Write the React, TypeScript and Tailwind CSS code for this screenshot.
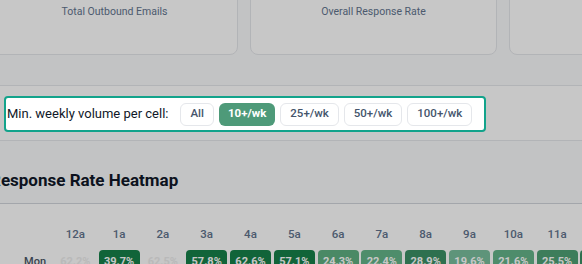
import { FC } from "react";

const HOURS = ["12a", "1a", "2a", "3a", "4a", "5a", "6a", "7a", "8a", "9a", "10a", "11a", "12p"];

// null bg = low volume cell (faded out)
const MON: { v: string; bg: string | null }[] = [
  { v: "62.2%", bg: null },
  { v: "39.7%", bg: "#17814a" },
  { v: "62.5%", bg: null },
  { v: "57.8%", bg: "#17814a" },
  { v: "62.6%", bg: "#17814a" },
  { v: "57.1%", bg: "#17814a" },
  { v: "24.3%", bg: "#5fb082" },
  { v: "22.4%", bg: "#65b589" },
  { v: "28.9%", bg: "#3b9066" },
  { v: "19.6%", bg: "#79be9d" },
  { v: "21.6%", bg: "#65b489" },
  { v: "25.5%", bg: "#4fa175" },
  { v: "31.0%", bg: "#3b9066" },
];

const FILTERS = ["All", "10+/wk", "25+/wk", "50+/wk", "100+/wk"];

const StatCard: FC<{ label: string }> = ({ label }) => (
  <div className="w-[247px] h-[76px] shrink-0 rounded-lg border border-gray-200 bg-white flex justify-center pt-[24px]">
    <span className="text-[10.5px] leading-4 text-slate-500">{label}</span>
  </div>
);

const App: FC = () => {
  return (
    <div
      className="relative w-[582px] h-[264px] overflow-hidden bg-gray-50"
      style={{ fontFamily: "Roboto, 'Liberation Sans', sans-serif" }}
    >
      {/* stat cards */}
      <div className="flex gap-3 -ml-[9px] -mt-[21px]">
        <StatCard label="Total Outbound Emails" />
        <StatCard label="Overall Response Rate" />
        <StatCard label="Avg Response Time" />
      </div>

      {/* filter band */}
      <div className="mt-[30px] -mx-4 px-4 border-y border-gray-200 bg-white pt-[10px] pb-[8px]">
        <div className="relative z-50 w-[482px] ml-[4px] h-[36px] flex items-center gap-3 rounded border-2 border-[#12a38b] bg-white pl-px pr-[10px]">
          <span className="text-[13px] text-gray-900 whitespace-nowrap">
            Min. weekly volume per cell:
          </span>
          <div className="flex gap-[5px]">
            {FILTERS.map((f) =>
              f === "10+/wk" ? (
                <button key={f} className="h-[23px] px-[9px] rounded-md bg-[#4e9a79] text-white text-[11.5px] font-bold">
                  {f}
                </button>
              ) : (
                <button key={f} className="h-[23px] px-[9px] rounded-md border border-gray-200 bg-white text-slate-600 text-[11.5px] font-medium">
                  {f}
                </button>
              )
            )}
          </div>
        </div>
      </div>

      {/* heatmap header */}
      <div className="h-[62px] flex items-center -ml-[10px] pt-[18px]">
        <h2 className="text-[17px] font-bold text-gray-900">Response Rate Heatmap</h2>
      </div>

      {/* heatmap body */}
      <div className="border-t border-gray-300 bg-white pt-[22px]">
        <div className="grid grid-cols-[48px_repeat(13,41px)] gap-x-[2.8px] gap-y-[8px] ml-[4px]">
          <div />
          {HOURS.map((h) => (
            <div key={h} className="text-center text-[11.5px] font-medium text-slate-500 leading-4">
              {h}
            </div>
          ))}
          <div className="flex items-center justify-end pr-[6px] text-[11px] font-medium text-gray-600">Mon</div>
          {MON.map((c, i) =>
            c.bg ? (
              <div
                key={i}
                className="h-[24px] rounded flex items-center justify-center text-[11px] font-bold text-white"
                style={{ backgroundColor: c.bg }}
              >
                {c.v}
              </div>
            ) : (
              <div key={i} className="h-[24px] rounded flex items-center justify-center text-[11px] font-bold text-[#eeeeee]">
                {c.v}
              </div>
            )
          )}
        </div>
      </div>

      {/* tour overlay */}
      <div className="absolute inset-0 z-40 bg-black/[0.22] pointer-events-none" />
    </div>
  );
};

export default App;
